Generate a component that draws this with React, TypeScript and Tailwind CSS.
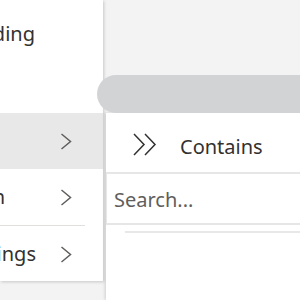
import { ReactNode } from "react";

function Chevron() {
  return (
    <svg width="12" height="17" viewBox="0 0 12 17" className="shrink-0">
      <polyline
        points="1.5,1 10.5,8.5 1.5,16"
        fill="none"
        stroke="#605e5c"
        strokeWidth="1.5"
      />
    </svg>
  );
}

function DoubleChevron() {
  return (
    <svg width="24" height="23" viewBox="0 0 24 23" className="shrink-0">
      <polyline
        points="1,1 11,11.5 1,22"
        fill="none"
        stroke="#323130"
        strokeWidth="1.5"
      />
      <polyline
        points="12,1 22,11.5 12,22"
        fill="none"
        stroke="#323130"
        strokeWidth="1.5"
      />
    </svg>
  );
}

// label box keeps only the tail of the text visible
function MenuItem({
  label,
  tail,
  active,
  chevron = true,
}: {
  label: string;
  tail: number;
  active?: boolean;
  chevron?: boolean;
}) {
  return (
    <div
      className={`h-[56px] flex items-center shrink-0 ${active ? "bg-[#e8e8e8]" : ""}`}
    >
      <div
        className="overflow-hidden whitespace-nowrap flex justify-end shrink-0"
        style={{ width: tail }}
      >
        <span>{label}</span>
      </div>
      {chevron && (
        <div className="flex" style={{ marginLeft: 60 - tail }}>
          <Chevron />
        </div>
      )}
    </div>
  );
}

function Divider({ children }: { children?: ReactNode }) {
  return <div className="h-px w-[85px] bg-[#e1dfdd] shrink-0">{children}</div>;
}

export default function App() {
  return (
    <div
      className="w-[300px] h-[300px] overflow-hidden bg-[#f3f3f3] flex text-[20px] text-[#323130]"
      style={{ fontFamily: '"Noto Sans", "Open Sans", sans-serif' }}
    >
      <div className="w-[103px] shrink-0">
        <div className="h-[281px] bg-white flex flex-col shadow-[1px_1px_3px_rgba(0,0,0,0.18)]">
          <div className="h-[113px] shrink-0 flex flex-col">
            <div className="h-[6px]" />
            <MenuItem label="Sort Descending" tail={35} chevron={false} />
          </div>
          <MenuItem label="Filter" tail={0} active />
          <MenuItem label="Group by column" tail={5} />
          <Divider />
          <MenuItem label="Column settings" tail={36} />
        </div>
      </div>
      <div className="flex-1 flex flex-col min-w-0">
        <div className="h-[75px] shrink-0" />
        <div className="h-[38px] shrink-0 -ml-[6px] rounded-l-full bg-[#d2d3d5] relative z-10" />
        <div className="flex-1 ml-[3px] bg-white shadow-[-1px_0_3px_rgba(0,0,0,0.15)] flex flex-col">
          <div className="h-[59px] shrink-0 flex items-center pt-[4px] pl-[27px] gap-[23px]">
            <DoubleChevron />
            <span className="pt-[4px]">Contains</span>
          </div>
          <div className="h-[53px] shrink-0 border-y-2 border-l border-[#e6e6e6] flex items-center pl-[7px] pt-[2px] text-[#605e5c]">
            Search...
          </div>
          <div className="h-[2px] mt-[6px] ml-[19px] bg-[#e8e8e8] shrink-0" />
        </div>
      </div>
    </div>
  );
}
